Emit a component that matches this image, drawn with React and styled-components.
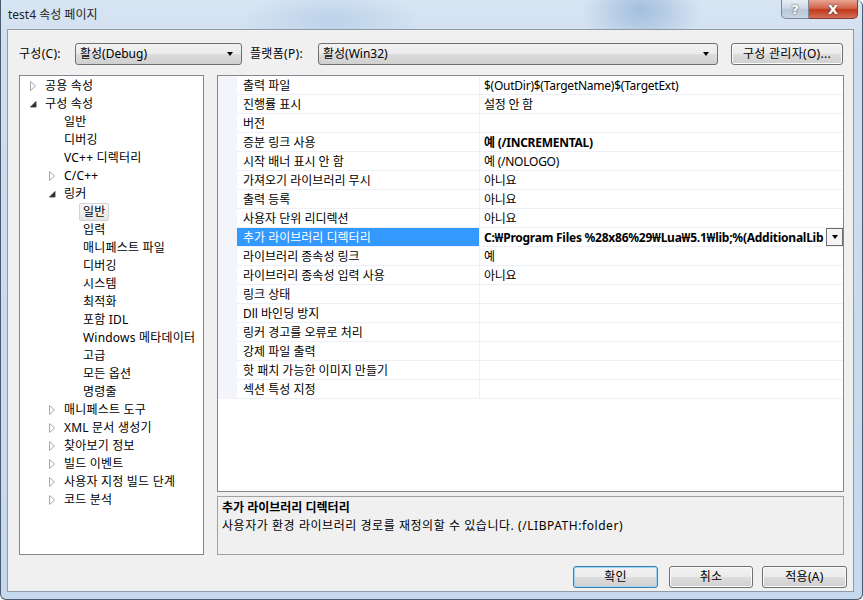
import React from 'react'
import styled, { createGlobalStyle } from 'styled-components'

const Global = createGlobalStyle`
  html, body {
    margin: 0;
    padding: 0;
    background: #fff;
  }
  body {
    font-family: 'Noto Sans', 'Noto Sans CJK KR', sans-serif;
    font-size: 12px;
    color: #000;
  }
`

const Window = styled.div`
  width: 863px;
  height: 600px;
  box-sizing: border-box;
  display: flex;
  flex-direction: column;
  border: 1px solid #4a5a70;
  border-top: none;
  border-radius: 0 6px 6px 6px;
  background:
    radial-gradient(ellipse 60px 40px at 640px 10px, rgba(120, 160, 205, 0.55), transparent),
    radial-gradient(ellipse 90px 30px at 330px 20px, rgba(150, 185, 220, 0.4), transparent),
    linear-gradient(180deg, #d8e5f3 0%, #cfdeef 8%, #c6d8ec 100%);
  overflow: hidden;
`

const TitleBar = styled.div`
  height: 29px;
  flex: none;
  display: flex;
  justify-content: space-between;
  align-items: flex-start;
  padding-left: 7px;
`

const Title = styled.div`
  padding-top: 7px;
  line-height: 16px;
  color: #1e1e1e;
`

const Caption = styled.div`
  display: flex;
  margin-right: 4px;
`

const CapButton = styled.div`
  height: 19px;
  width: ${p => p.w}px;
  box-sizing: border-box;
  display: flex;
  align-items: center;
  justify-content: center;
  border: 1px solid ${p => (p.close ? '#8a3a2a' : '#7c8797')};
  border-top: none;
  border-left: ${p => (p.close ? 'none' : undefined)};
  border-radius: ${p => (p.close ? '0 0 5px 0' : '0 0 0 5px')};
  background: ${p =>
    p.close
      ? 'linear-gradient(180deg, #e8a493 0%, #d4654a 45%, #c0391c 55%, #d2705a 100%)'
      : 'linear-gradient(180deg, #e6edf5 0%, #cfdae6 45%, #b8c6d6 55%, #c8d6e4 100%)'};
  color: #fff;
  font-family: 'DejaVu Sans', sans-serif;
  font-weight: bold;
  font-size: 13px;
  text-shadow: 0 0 2px #333;
`

const Client = styled.div`
  flex: 1;
  margin: 0 8px 7px 6px;
  border: 1px solid #8e9aa8;
  background: #f0f0f0;
  display: flex;
  flex-direction: column;
  padding: 13px 9px 0 11px;
`

const Toolbar = styled.div`
  display: flex;
  align-items: center;
  height: 22px;
`

const Label = styled.span`
  width: ${p => p.w}px;
  flex: none;
  line-height: 16px;
  letter-spacing: 0.3px;
`

const Combo = styled.div`
  width: ${p => p.w}px;
  height: 22px;
  flex: none;
  box-sizing: border-box;
  margin-right: ${p => p.mr || 0}px;
  border: 1px solid #707070;
  border-radius: 3px;
  background: linear-gradient(180deg, #f2f2f2 0%, #ebebeb 50%, #dddddd 51%, #cfcfcf 100%);
  display: flex;
  align-items: center;
  justify-content: space-between;
  padding: 0 8px 0 4px;
  line-height: 16px;
`

const DownArrow = styled.span`
  width: 0;
  height: 0;
  border-left: 3.5px solid transparent;
  border-right: 3.5px solid transparent;
  border-top: 4px solid #000;
`

const Button = styled.div`
  width: ${p => p.w}px;
  height: 22px;
  flex: none;
  box-sizing: border-box;
  margin-left: ${p => p.ml || 0}px;
  border: 1px solid ${p => (p.def ? '#3c7fb1' : '#707070')};
  border-radius: 3px;
  background: linear-gradient(180deg, #f2f2f2 0%, #ebebeb 50%, #dddddd 51%, #cfcfcf 100%);
  box-shadow: ${p => (p.def ? 'inset 0 0 0 1px #9fd5f2' : 'inset 0 0 0 1px #fcfcfc')};
  display: flex;
  align-items: center;
  justify-content: center;
  line-height: 16px;
  letter-spacing: 0.3px;
`

const Main = styled.div`
  display: flex;
  gap: 13px;
  margin-top: 10px;
  height: 480px;
`

const Tree = styled.div`
  width: 185px;
  box-sizing: border-box;
  border: 1px solid #828790;
  background: #fff;
  padding-top: 1px;
`

const TreeItem = styled.div`
  height: 18px;
  display: flex;
  align-items: center;
  padding-left: ${p => 10 + p.level * 19}px;
`

const Expander = styled.span`
  width: 15px;
  height: 18px;
  flex: none;
  display: flex;
  align-items: center;
`

const TreeText = styled.span`
  line-height: 16px;
  white-space: nowrap;
  letter-spacing: 0.2px;
  ${p =>
    p.selected &&
    `
    margin-left: -4px;
    padding: 0 3px;
    border: 1px solid #d2d2d2;
    border-radius: 2px;
    background: linear-gradient(180deg, #f9f9f9, #e6e6e6);
  `}
`

const Right = styled.div`
  width: 627px;
  display: flex;
  flex-direction: column;
  gap: 4px;
`

const Grid = styled.div`
  height: 417px;
  box-sizing: border-box;
  border: 1px solid #828790;
  background: #fff;
`

const Row = styled.div`
  display: grid;
  grid-template-columns: 19px 243px 1fr;
  height: 19px;
`

const Gutter = styled.div`
  background: #f3f5fb;
`

const NameCell = styled.div`
  box-sizing: border-box;
  border-right: 1px solid #eef0f7;
  border-bottom: 1px solid #eef0f7;
  padding: 2px 0 0 6px;
  display: flex;
  align-items: center;
  line-height: 16px;
  white-space: nowrap;
  background: ${p => (p.selected ? '#3399ff' : '#fff')};
  color: ${p => (p.selected ? '#fff' : '#000')};
`

const ValueCell = styled.div`
  box-sizing: border-box;
  border-bottom: 1px solid #eef0f7;
  padding-left: 4px;
  display: flex;
  align-items: center;
  line-height: 16px;
  white-space: nowrap;
  overflow: hidden;
  letter-spacing: -0.25px;
  font-weight: ${p => (p.bold ? 'bold' : 'normal')};
`

const ValueText = styled.span`
  flex: 1;
  overflow: hidden;
  padding-top: 2px;
`

const CellDrop = styled.div`
  width: 17px;
  height: 18px;
  flex: none;
  box-sizing: border-box;
  border: 1px solid #6d6d6d;
  background: #f4f4f4;
  display: flex;
  align-items: center;
  justify-content: center;
`

const Desc = styled.div`
  height: 59px;
  box-sizing: border-box;
  border: 1px solid #a0a0a0;
  background: #f0f0f0;
  padding: 2px 4px;
  line-height: 18px;
`

const DescTitle = styled.div`
  font-weight: bold;
`

const DescText = styled.div`
  letter-spacing: 0.55px;
`

const Footer = styled.div`
  display: flex;
  justify-content: flex-end;
  margin-top: 11px;
  margin-right: -3px;
`

const Collapsed = () => (
  <svg width="6" height="10" viewBox="0 0 6 10">
    <path d="M0.5 0.5 L5.5 5 L0.5 9.5 Z" fill="#fff" stroke="#a6a6a6" />
  </svg>
)

const Expanded = () => (
  <svg width="7" height="7" viewBox="0 0 7 7">
    <path d="M6 0.5 L6 6 L0.5 6 Z" fill="#333" stroke="#333" strokeWidth="0.8" />
  </svg>
)

const tree = [
  { t: '공용 속성', l: 0, e: 'c' },
  { t: '구성 속성', l: 0, e: 'e' },
  { t: '일반', l: 1 },
  { t: '디버깅', l: 1 },
  { t: 'VC++ 디렉터리', l: 1 },
  { t: 'C/C++', l: 1, e: 'c' },
  { t: '링커', l: 1, e: 'e' },
  { t: '일반', l: 2, s: true },
  { t: '입력', l: 2 },
  { t: '매니페스트 파일', l: 2 },
  { t: '디버깅', l: 2 },
  { t: '시스템', l: 2 },
  { t: '최적화', l: 2 },
  { t: '포함 IDL', l: 2 },
  { t: 'Windows 메타데이터', l: 2 },
  { t: '고급', l: 2 },
  { t: '모든 옵션', l: 2 },
  { t: '명령줄', l: 2 },
  { t: '매니페스트 도구', l: 1, e: 'c' },
  { t: 'XML 문서 생성기', l: 1, e: 'c' },
  { t: '찾아보기 정보', l: 1, e: 'c' },
  { t: '빌드 이벤트', l: 1, e: 'c' },
  { t: '사용자 지정 빌드 단계', l: 1, e: 'c' },
  { t: '코드 분석', l: 1, e: 'c' },
]

const props = [
  ['출력 파일', '$(OutDir)$(TargetName)$(TargetExt)'],
  ['진행률 표시', '설정 안 함'],
  ['버전', ''],
  ['증분 링크 사용', '예 (/INCREMENTAL)', true],
  ['시작 배너 표시 안 함', '예 (/NOLOGO)'],
  ['가져오기 라이브러리 무시', '아니요'],
  ['출력 등록', '아니요'],
  ['사용자 단위 리디렉션', '아니요'],
  ['추가 라이브러리 디렉터리', 'C:\u20A9Program Files %28x86%29\u20A9Lua\u20A95.1\u20A9lib;%(AdditionalLib', true, true],
  ['라이브러리 종속성 링크', '예'],
  ['라이브러리 종속성 입력 사용', '아니요'],
  ['링크 상태', ''],
  ['Dll 바인딩 방지', ''],
  ['링커 경고를 오류로 처리', ''],
  ['강제 파일 출력', ''],
  ['핫 패치 가능한 이미지 만들기', ''],
  ['섹션 특성 지정', ''],
]

export default function App() {
  return (
    <>
      <Global />
      <Window>
        <TitleBar>
          <Title>test4 속성 페이지</Title>
          <Caption>
            <CapButton w={28}>?</CapButton>
            <CapButton w={49} close>
              X
            </CapButton>
          </Caption>
        </TitleBar>
        <Client>
          <Toolbar>
            <Label w={56}>구성(C):</Label>
            <Combo w={167} mr={8}>
              <span>활성(Debug)</span>
              <DownArrow />
            </Combo>
            <Label w={68}>플랫폼(P):</Label>
            <Combo w={400} mr={13}>
              <span>활성(Win32)</span>
              <DownArrow />
            </Combo>
            <Button w={112}>구성 관리자(O)...</Button>
          </Toolbar>
          <Main>
            <Tree>
              {tree.map((n, i) => (
                <TreeItem key={i} level={n.l}>
                  <Expander>
                    {n.e === 'c' && <Collapsed />}
                    {n.e === 'e' && <Expanded />}
                  </Expander>
                  <TreeText selected={n.s}>{n.t}</TreeText>
                </TreeItem>
              ))}
            </Tree>
            <Right>
              <Grid>
                {props.map(([name, value, bold, sel], i) => (
                  <Row key={i}>
                    <Gutter />
                    <NameCell selected={sel}>{name}</NameCell>
                    <ValueCell bold={bold}>
                      <ValueText>{value}</ValueText>
                      {sel && (
                        <CellDrop>
                          <DownArrow />
                        </CellDrop>
                      )}
                    </ValueCell>
                  </Row>
                ))}
              </Grid>
              <Desc>
                <DescTitle>추가 라이브러리 디렉터리</DescTitle>
                <DescText>사용자가 환경 라이브러리 경로를 재정의할 수 있습니다. (/LIBPATH:folder)</DescText>
              </Desc>
            </Right>
          </Main>
          <Footer>
            <Button w={85} def>
              확인
            </Button>
            <Button w={84} ml={11}>
              취소
            </Button>
            <Button w={85} ml={9}>
              적용(A)
            </Button>
          </Footer>
        </Client>
      </Window>
    </>
  )
}
